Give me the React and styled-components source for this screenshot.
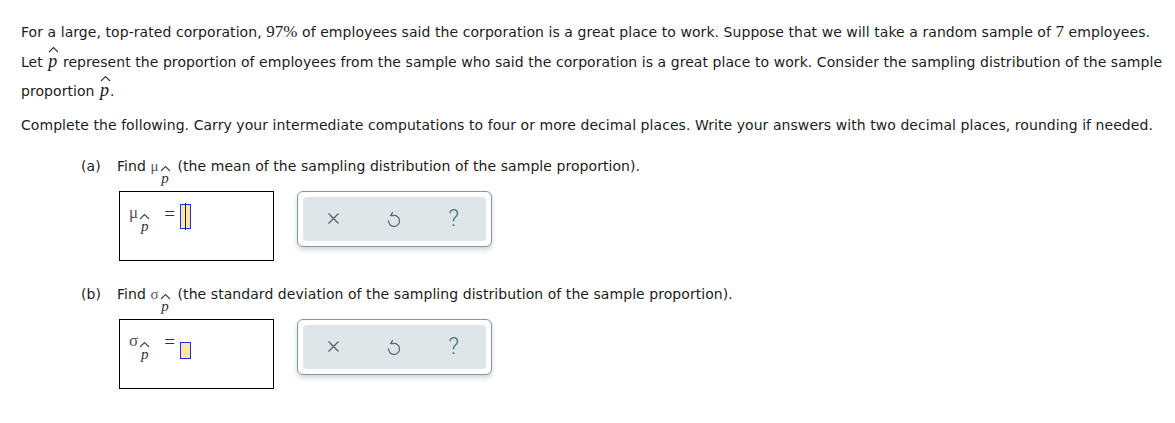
import React from 'react'
import styled, { createGlobalStyle } from 'styled-components'

const GlobalStyle = createGlobalStyle`
  html, body {
    margin: 0;
    padding: 0;
    background: #fff;
  }
  body {
    font-family: "DejaVu Sans", Verdana, sans-serif;
    font-size: 14px;
    letter-spacing: 0.06px;
    color: #1c1c1c;
  }
`

const Page = styled.div`
  padding: 17px 0 0 21px;
`

const Para = styled.p`
  margin: 0;
  line-height: 29.5px;
  white-space: nowrap;
`

const Instructions = styled.p`
  margin: 8.5px 0 0;
  line-height: 20px;
  white-space: nowrap;
`

const Num = styled.span`
  font-family: "Liberation Serif", "Times New Roman", serif;
  font-size: 17px;
`

const MathVar = styled.span`
  font-family: "Liberation Serif", "Times New Roman", serif;
  font-style: italic;
  font-size: 18px;
`

const HatWrap = styled.span`
  position: relative;
  display: inline-block;
  padding: 0 1px;
  line-height: 18px;
`

const HatMark = styled.svg`
  position: absolute;
  left: 50%;
  top: -6px;
  width: 11px;
  height: 7px;
  margin-left: -5px;
`

const Hat = () => (
  <HatMark viewBox="0 0 11 7">
    <path d="M1 6 L5.5 1.5 L10 6" fill="none" stroke="#333" strokeWidth="1.1" />
  </HatMark>
)

const PHat = () => (
  <HatWrap>
    <MathVar>p</MathVar>
    <Hat />
  </HatWrap>
)

const Part = styled.section`
  padding-left: 60px;
  margin-top: ${p => p.$top || 0}px;
`

const PartTitle = styled.div`
  display: flex;
  align-items: baseline;
  line-height: 20px;
  white-space: nowrap;
`

const Label = styled.span`
  width: 36px;
`

const Sym = styled.span`
  display: inline-flex;
  align-items: flex-start;
  margin-right: ${p => p.$gap ?? 4}px;
  font-family: "Liberation Serif", "Times New Roman", serif;
  font-size: ${p => p.$size || 15}px;
  color: #555;
`

const Sub = styled.span`
  display: inline-flex;
  flex-direction: column;
  align-items: center;
  margin-left: 1px;
  transform: translateY(${p => p.$drop || 9}px);
`

const SubHat = styled.svg`
  width: 11px;
  height: 7px;
`

const SubP = styled.span`
  font-style: italic;
  font-size: 15px;
  color: #333;
  line-height: 12px;
`

const SymP = ({ children, size, gap, drop }) => (
  <Sym $size={size} $gap={gap}>
    {children}
    <Sub $drop={drop}>
      <SubHat viewBox="0 0 11 7">
        <path d="M1 6 L5.5 1.5 L10 6" fill="none" stroke="#444" strokeWidth="1.2" />
      </SubHat>
      <SubP>p</SubP>
    </Sub>
  </Sym>
)

const AnswerRow = styled.div`
  display: flex;
  align-items: flex-start;
  gap: 23px;
  margin-top: 15px;
  padding-left: 38px;
`

const AnswerBox = styled.div`
  box-sizing: border-box;
  width: 155px;
  height: 70px;
  border: 1px solid #000;
  display: flex;
  align-items: flex-start;
  padding: 11px 0 0 9px;
`

const Eq = styled.span`
  font-family: "Liberation Serif", "Times New Roman", serif;
  font-size: 19px;
  color: #333;
  margin: 0 5px 0 14px;
  line-height: 22px;
`

const Slot = styled.span`
  box-sizing: border-box;
  display: inline-block;
  width: 11px;
  height: ${p => (p.$active ? 25 : 17)}px;
  margin-top: ${p => (p.$active ? 1 : 11)}px;
  background: #fbe6a6;
  border: 1px solid #1d2bff;
  position: relative;
  ${p =>
    p.$active &&
    `
    &::after {
      content: '';
      position: absolute;
      left: 4px;
      top: -2px;
      bottom: -2px;
      border-left: 1px solid #222;
    }
  `}
`

const Tools = styled.div`
  box-sizing: border-box;
  width: 195px;
  height: 56px;
  padding: 5px;
  border: 1px solid #7f98a3;
  border-radius: 6px;
  background: #fff;
  box-shadow: 0 3px 5px rgba(90, 110, 120, 0.28);
`

const ToolInner = styled.div`
  box-sizing: border-box;
  height: 100%;
  background: #dfe6e9;
  border-radius: 4px;
  display: grid;
  grid-template-columns: repeat(3, 1fr);
  align-items: center;
  justify-items: center;
  padding: 0 2px 0 0;
`

const ToolButton = styled.button`
  border: 0;
  background: none;
  padding: 0;
  width: 30px;
  height: 30px;
  display: flex;
  align-items: center;
  justify-content: center;
  color: #4d6e7b;
  font-family: Roboto, "DejaVu Sans", sans-serif;
  font-size: 23px;
  font-weight: 300;
  cursor: pointer;
`

const ClearIcon = () => (
  <svg width="13" height="13" viewBox="0 0 13 13">
    <path d="M1.5 1.5 L11.5 11.5 M11.5 1.5 L1.5 11.5" stroke="currentColor" strokeWidth="1.4" fill="none" />
  </svg>
)

const UndoIcon = () => (
  <svg width="16" height="18" viewBox="0 0 16 18">
    <path
      d="M3.5 11 A5.5 5.5 0 1 0 8.5 5.5 L6 5.5 M7.5 2.5 L5.5 5.5"
      fill="none"
      stroke="currentColor"
      strokeWidth="1.3"
      strokeLinecap="round"
      strokeLinejoin="round"
    />
  </svg>
)

const Toolbar = () => (
  <Tools>
    <ToolInner>
      <ToolButton aria-label="clear">
        <ClearIcon />
      </ToolButton>
      <ToolButton aria-label="undo">
        <UndoIcon />
      </ToolButton>
      <ToolButton aria-label="help">?</ToolButton>
    </ToolInner>
  </Tools>
)

export default function App() {
  return (
    <>
      <GlobalStyle />
      <Page>
        <Para>
          For a large, top-rated corporation, <Num>97%</Num> of employees said the corporation is a
          great place to work. Suppose that we will take a random sample of <Num>7</Num> employees.
          <br />
          Let <PHat /> represent the proportion of employees from the sample who said the corporation
          is a great place to work. Consider the sampling distribution of the sample
          <br />
          proportion <PHat />.
        </Para>
        <Instructions>
          Complete the following. Carry your intermediate computations to four or more decimal
          places. Write your answers with two decimal places, rounding if needed.
        </Instructions>

        <Part $top={20.5}>
          <PartTitle>
            <Label>(a)</Label>
            Find&nbsp;<SymP gap={7}>μ</SymP>(the mean of the sampling distribution of the sample proportion).
          </PartTitle>
          <AnswerRow>
            <AnswerBox>
              <SymP size={17} gap={0} drop={10}>μ</SymP>
              <Eq>=</Eq>
              <Slot $active />
            </AnswerBox>
            <Toolbar />
          </AnswerRow>
        </Part>

        <Part $top={23}>
          <PartTitle>
            <Label>(b)</Label>
            Find&nbsp;<SymP gap={7}>σ</SymP>(the standard deviation of the sampling distribution of the sample proportion).
          </PartTitle>
          <AnswerRow>
            <AnswerBox>
              <SymP size={17} gap={0} drop={10}>σ</SymP>
              <Eq>=</Eq>
              <Slot />
            </AnswerBox>
            <Toolbar />
          </AnswerRow>
        </Part>
      </Page>
    </>
  )
}
